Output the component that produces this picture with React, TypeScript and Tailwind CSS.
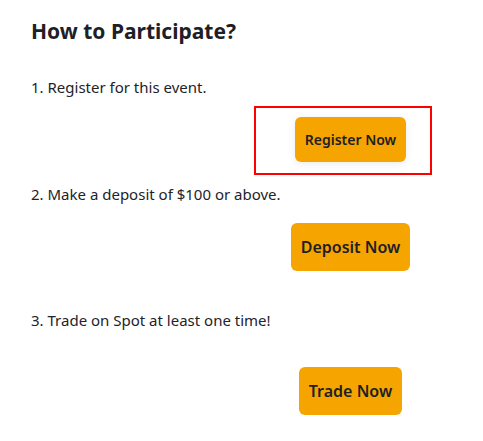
export default function App() {
  const font = { fontFamily: '"Noto Sans", "Open Sans", sans-serif' };
  return (
    <div className="w-[483px] h-[441px] bg-white text-[#1e2329]" style={font}>
      <div className="pl-[31px] pt-[16px] flex flex-col">
        <h1 className="text-[21px] leading-[30px] font-bold text-[#1e2026]">How to Participate?</h1>
        <p className="mt-[31px] text-[15px] leading-[20px]">1. Register for this event.</p>
        <div className="mt-[9px] ml-[223px] w-[178px] h-[69px] border-2 border-[#ff0000] flex items-start justify-start pt-[9px] pl-[39px]">
          <button className="w-[111px] h-[45px] rounded-[6px] bg-[#f6a500] text-[14px] font-semibold text-[#1e2026] shadow-[0_2px_8px_rgba(0,0,0,0.08)]">
            Register Now
          </button>
        </div>
        <p className="mt-[9px] text-[15px] leading-[20px]">2. Make a deposit of $100 or above.</p>
        <div className="mt-[19px] ml-[260px]">
          <button className="w-[119px] h-[48px] rounded-[6px] bg-[#f6a500] text-[16px] font-semibold text-[#1e2026]">
            Deposit Now
          </button>
        </div>
        <p className="mt-[39px] text-[15px] leading-[20px]">3. Trade on Spot at least one time!</p>
        <div className="mt-[37px] ml-[268px]">
          <button className="w-[103px] h-[48px] rounded-[6px] bg-[#f6a500] text-[16px] font-semibold text-[#1e2026]">
            Trade Now
          </button>
        </div>
      </div>
    </div>
  );
}
